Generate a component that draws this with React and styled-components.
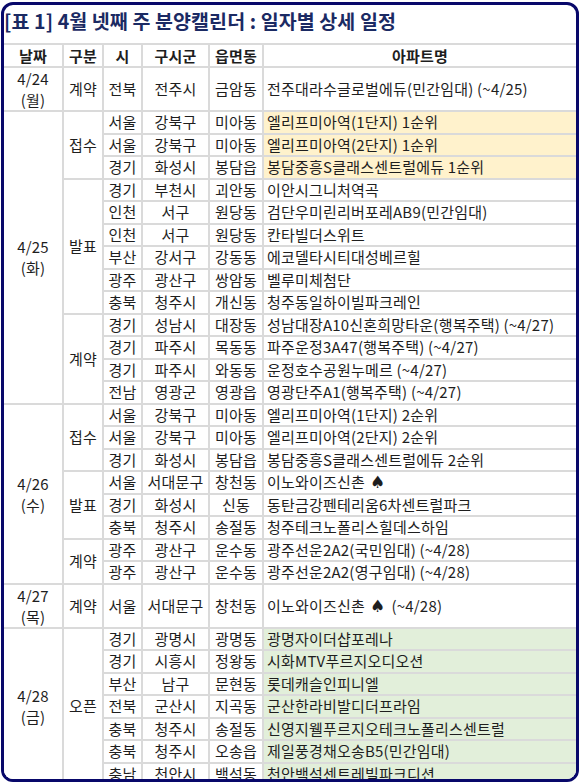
import React from 'react';
import styled, { createGlobalStyle } from 'styled-components';

const GlobalStyle = createGlobalStyle`
    html, body {
        margin: 0;
        padding: 0;
        background: #fff;
    }
    body {
        font-family: 'Noto Sans CJK KR', 'Noto Sans', sans-serif;
        color: #1e1e1e;
    }
`;

const Frame = styled.div`
    box-sizing: border-box;
    width: 578px;
    height: 780px;
    margin: 2px 0 0 1px;
    border: 3px solid #08086a;
    border-radius: 12px;
    overflow: hidden;
    background: #fff;
`;

const Title = styled.h1`
    margin: 0;
    height: 38px;
    padding-top: 3px;
    box-sizing: border-box;
    font-size: 19.5px;
    line-height: 26px;
    font-weight: 700;
    color: #1b2a63;
    white-space: nowrap;
    letter-spacing: 0.1px;
`;

const Grid = styled.div`
    display: grid;
    grid-template-columns: 58px 38px 37px 65px 52px 1fr;
    grid-template-rows: 21px;
    grid-auto-rows: minmax(20.5px, auto);
    gap: 2px;
    padding-top: 2px;
    background: #dadada;
    font-size: 15px;
    letter-spacing: 0.2px;
`;

const Cell = styled.div`
    background: #fff;
    display: flex;
    align-items: center;
    justify-content: center;
    line-height: 20px;
    white-space: nowrap;
    overflow: hidden;
`;

const HeadCell = styled(Cell)`
    font-weight: 700;
`;

const DateCell = styled(Cell)`
    grid-row: span ${(p) => p.$span};
    flex-direction: column;
    line-height: 21px;
`;

const KindCell = styled(Cell)`
    grid-row: span ${(p) => p.$span};
`;

const toneColor = { yellow: '#fff2cc', green: '#e2efda', none: '#fff' };

const NameCell = styled(Cell)`
    justify-content: flex-start;
    padding-left: 3px;
    background: ${(p) => toneColor[p.$tone || 'none']};
`;

const Spade = styled.span`
    font-family: 'DejaVu Sans', sans-serif;
    font-size: 17px;
    margin: 0 6px 0 5px;
`;

const days = [
    {
        date: '4/24', dow: '월',
        groups: [
            { kind: '계약', rows: [['전북', '전주시', '금암동', '전주대라수글로벌에듀(민간임대) (~4/25)']] },
        ],
    },
    {
        date: '4/25', dow: '화',
        groups: [
            {
                kind: '접수', tone: 'yellow', rows: [
                    ['서울', '강북구', '미아동', '엘리프미아역(1단지) 1순위'],
                    ['서울', '강북구', '미아동', '엘리프미아역(2단지) 1순위'],
                    ['경기', '화성시', '봉담읍', '봉담중흥S클래스센트럴에듀 1순위'],
                ],
            },
            {
                kind: '발표', rows: [
                    ['경기', '부천시', '괴안동', '이안시그니처역곡'],
                    ['인천', '서구', '원당동', '검단우미린리버포레AB9(민간임대)'],
                    ['인천', '서구', '원당동', '칸타빌더스위트'],
                    ['부산', '강서구', '강동동', '에코델타시티대성베르힐'],
                    ['광주', '광산구', '쌍암동', '벨루미체첨단'],
                    ['충북', '청주시', '개신동', '청주동일하이빌파크레인'],
                ],
            },
            {
                kind: '계약', rows: [
                    ['경기', '성남시', '대장동', '성남대장A10신혼희망타운(행복주택) (~4/27)'],
                    ['경기', '파주시', '목동동', '파주운정3A47(행복주택) (~4/27)'],
                    ['경기', '파주시', '와동동', '운정호수공원누메르 (~4/27)'],
                    ['전남', '영광군', '영광읍', '영광단주A1(행복주택) (~4/27)'],
                ],
            },
        ],
    },
    {
        date: '4/26', dow: '수',
        groups: [
            {
                kind: '접수', rows: [
                    ['서울', '강북구', '미아동', '엘리프미아역(1단지) 2순위'],
                    ['서울', '강북구', '미아동', '엘리프미아역(2단지) 2순위'],
                    ['경기', '화성시', '봉담읍', '봉담중흥S클래스센트럴에듀 2순위'],
                ],
            },
            {
                kind: '발표', rows: [
                    ['서울', '서대문구', '창천동', '이노와이즈신촌', true],
                    ['경기', '화성시', '신동', '동탄금강펜테리움6차센트럴파크'],
                    ['충북', '청주시', '송절동', '청주테크노폴리스힐데스하임'],
                ],
            },
            {
                kind: '계약', rows: [
                    ['광주', '광산구', '운수동', '광주선운2A2(국민임대) (~4/28)'],
                    ['광주', '광산구', '운수동', '광주선운2A2(영구임대) (~4/28)'],
                ],
            },
        ],
    },
    {
        date: '4/27', dow: '목',
        groups: [
            { kind: '계약', rows: [['서울', '서대문구', '창천동', '이노와이즈신촌', true, '(~4/28)']] },
        ],
    },
    {
        date: '4/28', dow: '금',
        groups: [
            {
                kind: '오픈', tone: 'green', rows: [
                    ['경기', '광명시', '광명동', '광명자이더샵포레나'],
                    ['경기', '시흥시', '정왕동', '시화MTV푸르지오디오션'],
                    ['부산', '남구', '문현동', '롯데캐슬인피니엘'],
                    ['전북', '군산시', '지곡동', '군산한라비발디더프라임'],
                    ['충북', '청주시', '송절동', '신영지웰푸르지오테크노폴리스센트럴'],
                    ['충북', '청주시', '오송읍', '제일풍경채오송B5(민간임대)'],
                    ['충남', '천안시', '백석동', '천안백석센트레빌파크디션'],
                ],
            },
        ],
    },
];

const headers = ['날짜', '구분', '시', '구시군', '읍면동', '아파트명'];

const App = () => {
    return (
        <>
            <GlobalStyle />
            <Frame>
                <Title>[표 1] 4월 넷째 주 분양캘린더 : 일자별 상세 일정</Title>
                <Grid>
                    {headers.map((h) => <HeadCell key={h}>{h}</HeadCell>)}
                    {days.map((day) => {
                        const total = day.groups.reduce((n, g) => n + g.rows.length, 0);
                        return day.groups.map((group, gi) =>
                            group.rows.map((row, ri) => {
                                const [si, gu, dong, name, spade, tail] = row;
                                const key = `${day.date}-${gi}-${ri}`;
                                return (
                                    <React.Fragment key={key}>
                                        {gi === 0 && ri === 0 && (
                                            <DateCell $span={total}>
                                                <span>{day.date}</span>
                                                <span>({day.dow})</span>
                                            </DateCell>
                                        )}
                                        {ri === 0 && <KindCell $span={group.rows.length}>{group.kind}</KindCell>}
                                        <Cell>{si}</Cell>
                                        <Cell>{gu}</Cell>
                                        <Cell>{dong}</Cell>
                                        <NameCell $tone={group.tone}>
                                            {name}
                                            {spade && <Spade>♠</Spade>}
                                            {tail}
                                        </NameCell>
                                    </React.Fragment>
                                );
                            })
                        );
                    })}
                </Grid>
            </Frame>
        </>
    );
};

export default App;
